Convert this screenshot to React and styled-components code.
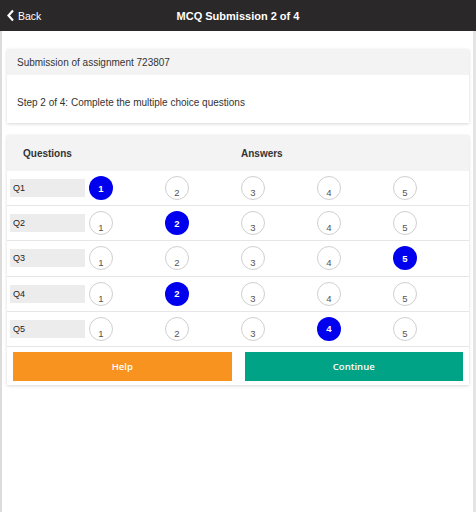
import styled, { createGlobalStyle } from "styled-components";

const GlobalStyle = createGlobalStyle`
    body {
        margin: 0;
        background: #ffffff;
        font-family: "Liberation Sans", Arial, sans-serif;
    }
`;

const Page = styled.div`
    min-height: 100vh;
    display: flex;
    flex-direction: column;
`;

const TopBar = styled.div`
    height: 31px;
    background: #2a2828;
    color: #ffffff;
    display: flex;
    align-items: center;
    position: relative;
`;

const BackButton = styled.div`
    display: flex;
    align-items: center;
    gap: 3px;
    padding-left: 6px;
    font-size: 10.5px;
    z-index: 1;
`;

const Title = styled.div`
    position: absolute;
    left: 0;
    right: 0;
    text-align: center;
    font-size: 11px;
    font-weight: bold;
`;

const Body = styled.div`
    flex: 1;
    border-left: 2px solid #dcdcdc;
    border-right: 3px solid #e4e4e4;
    padding: 18px 4px 0 5px;
    display: flex;
    flex-direction: column;
    gap: 12px;
`;

const Card = styled.div`
    background: #ffffff;
    box-shadow: 0 1px 3px rgba(0, 0, 0, 0.16);
`;

const InfoHeader = styled.div`
    background: #f3f3f3;
    height: 26px;
    display: flex;
    align-items: center;
    padding-left: 10px;
    font-size: 10px;
    color: #333;
`;

const InfoBody = styled.div`
    padding: 22px 10px 15px;
    font-size: 10px;
    color: #333;
`;

const Grid = styled.div`
    display: grid;
    grid-template-columns: 79px repeat(5, 76px);
    padding-left: 3px;
    align-items: center;
`;

const TableHeader = styled(Grid)`
    background: #f3f3f3;
    height: 36px;
    font-size: 10px;
    font-weight: bold;
    color: #333;
`;

const HeadCell = styled.div`
    grid-column: ${(p) => p.$col};
    padding-left: ${(p) => p.$pad || 0}px;
`;

const Row = styled(Grid)`
    height: 34.2px;
    border-bottom: 1px solid #e6e6e6;
`;

const QLabel = styled.div`
    width: 72px;
    height: 18px;
    background: #ececec;
    font-size: 9px;
    color: #222;
    display: flex;
    align-items: center;
    padding-left: 3px;
`;

const Bubble = styled.div`
    width: 24px;
    height: 24px;
    border-radius: 50%;
    box-sizing: border-box;
    display: flex;
    justify-content: center;
    font-size: 9.5px;
    ${(p) =>
        p.$on
            ? `
        background: #0000ee;
        color: #ffffff;
        font-weight: bold;
        align-items: center;
    `
            : `
        background: #ffffff;
        border: 1px solid #cfcfcf;
        color: #555;
        align-items: flex-end;
        padding-bottom: 1px;
    `}
`;

const Actions = styled.div`
    display: flex;
    gap: 13px;
    padding: 5px 6px 4px;
`;

const Button = styled.button`
    flex: 1;
    height: 29px;
    border: none;
    background: ${(p) => p.$color};
    color: #ffffff;
    font-family: "Open Sans", "Liberation Sans", sans-serif;
    font-size: 9.5px;
    font-weight: 600;
`;

const answers = [1, 2, 5, 2, 4];

function Chevron() {
    return (
        <svg width="9" height="13" viewBox="0 0 9 13">
            <path d="M7 1.5 L2.5 6.5 L7 11.5" fill="none" stroke="#fff" strokeWidth="2.2" />
        </svg>
    );
}

export default function App() {
    return (
        <Page>
            <GlobalStyle />
            <TopBar>
                <BackButton>
                    <Chevron />
                    Back
                </BackButton>
                <Title>MCQ Submission 2 of 4</Title>
            </TopBar>
            <Body>
                <Card>
                    <InfoHeader>Submission of assignment 723807</InfoHeader>
                    <InfoBody>Step 2 of 4: Complete the multiple choice questions</InfoBody>
                </Card>
                <Card>
                    <TableHeader>
                        <HeadCell $col="1 / 3" $pad={13}>Questions</HeadCell>
                        <HeadCell $col="4">Answers</HeadCell>
                    </TableHeader>
                    {answers.map((a, i) => (
                        <Row key={i}>
                            <QLabel>Q{i + 1}</QLabel>
                            {[1, 2, 3, 4, 5].map((n) => (
                                <Bubble key={n} $on={n === a}>
                                    {n}
                                </Bubble>
                            ))}
                        </Row>
                    ))}
                    <Actions>
                        <Button $color="#f7931e">Help</Button>
                        <Button $color="#00a386">Continue</Button>
                    </Actions>
                </Card>
            </Body>
        </Page>
    );
}
